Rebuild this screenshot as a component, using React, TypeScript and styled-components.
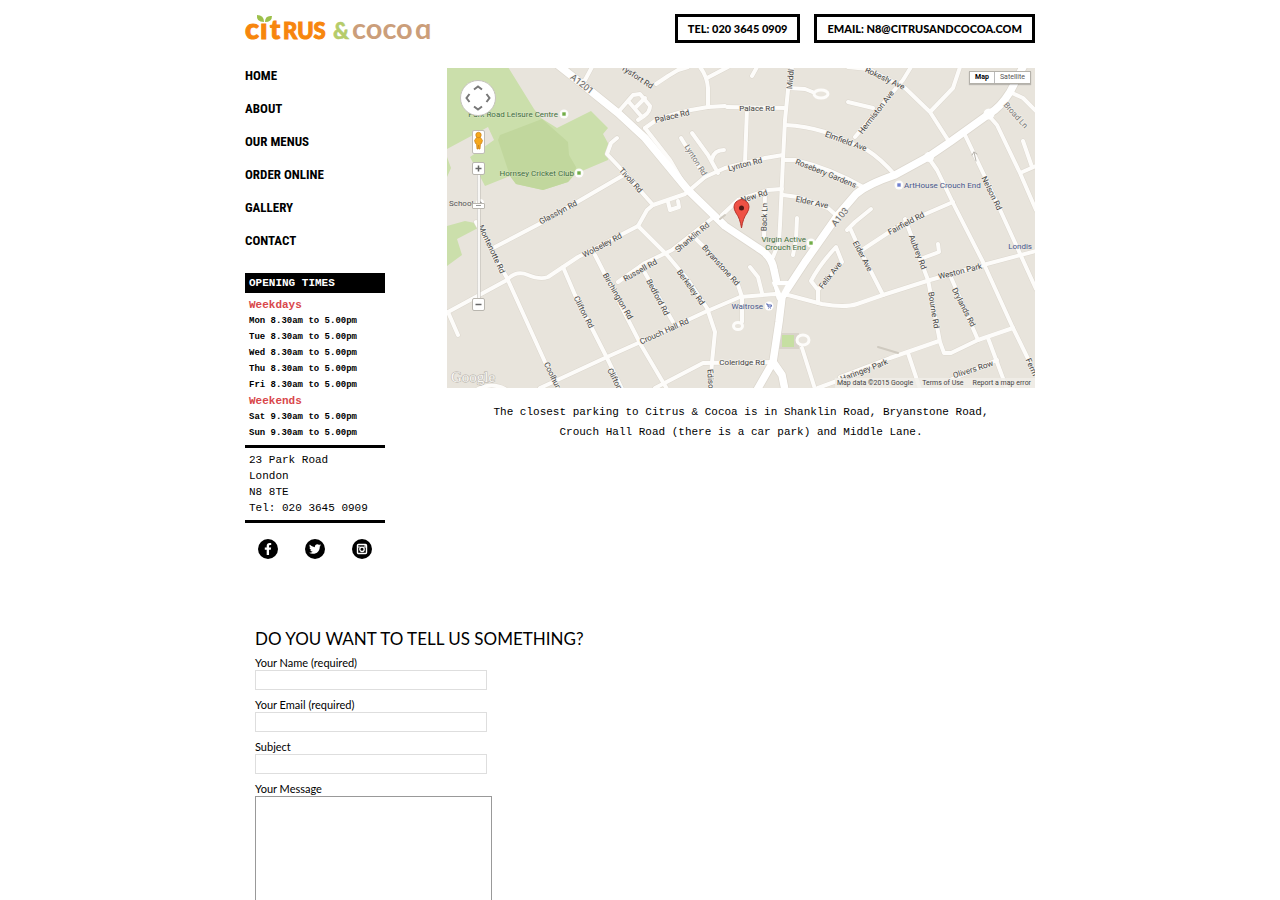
import React from "react";
import styled, { createGlobalStyle } from "styled-components";
import { FaFacebookF, FaTwitter } from "react-icons/fa";

const Global = createGlobalStyle`
  *, *::before, *::after { box-sizing: border-box; }
  body { margin: 0; background: #fff; color: #000; font-family: Lato, "Liberation Sans", sans-serif; }
  h1, h2, h3, p, ul, address { margin: 0; padding: 0; font-style: normal; }
  ul { list-style: none; }
  a { color: inherit; text-decoration: none; }
`;

const mono = `"Liberation Mono", "Courier New", monospace`;

const Page = styled.div`
  max-width: 790px;
  margin: 0 auto;
`;

const Header = styled.header`
  display: flex;
  flex-wrap: wrap;
  justify-content: space-between;
  gap: 14px;
  padding: 14px 0 25px;
`;

const LogoLink = styled.a`
  display: block;
  height: 29px;
`;

const LogoSvg = styled.svg`
  display: block;
  overflow: visible;
`;

const Contacts = styled.div`
  display: flex;
  flex-wrap: wrap;
  gap: 14px;
`;

const ContactLink = styled.a`
  padding: 0 10px;
  border: 3px solid #000;
  font-size: 11px;
  font-weight: 900;
  line-height: 23px;
`;

const Columns = styled.div`
  display: grid;
  grid-template-columns: 182px minmax(0, 1fr);
  gap: 20px;
  @media (max-width: 640px) {
    grid-template-columns: minmax(0, 1fr);
  }
`;

const Menu = styled.ul`
  display: flex;
  flex-direction: column;
  gap: 17px;
  margin-bottom: 24px;
  font-family: "Roboto Condensed", "Liberation Sans Narrow", "Liberation Sans", sans-serif;
  font-size: 13px;
  font-weight: 700;
  line-height: 16px;
`;

const Info = styled.section`
  width: 140px;
  font-family: ${mono};
  font-size: 11px;
  line-height: 16px;
`;

const InfoTitle = styled.h2`
  padding: 0 4px;
  background: #000;
  color: #fff;
  font-size: 11px;
  line-height: 20px;
`;

const InfoBlock = styled.div`
  padding: 4px;
  border-bottom: 3px solid #000;
  white-space: nowrap;
`;

const DayGroup = styled.h3`
  color: #d9474b;
  font-size: 11px;
  line-height: 16px;
`;

const Hours = styled.ul`
  font-size: 9px;
  font-weight: 700;
`;

const Social = styled.nav`
  display: flex;
  gap: 27px;
  padding: 16px 13px 0;
`;

const SocialLink = styled.a`
  display: grid;
  place-items: center;
  width: 20px;
  height: 20px;
  border-radius: 50%;
  background: #000;
  color: #fff;
  font-size: 12px;
`;

const MapFrame = styled.div`
  position: relative;
  overflow: hidden;
  background: #e8e4dc;
  font-family: Roboto, sans-serif;
`;

const MapSvg = styled.svg`
  display: block;
  width: 100%;
  height: auto;
  font-family: Roboto, sans-serif;
`;

const MapTypes = styled.div`
  position: absolute;
  top: 3px;
  right: 4px;
  display: flex;
  border: 1px solid #b4b1aa;
  background: #fff;
  box-shadow: 0 1px 1px rgba(0, 0, 0, 0.2);
`;

const MapType = styled.button<{ $active?: boolean }>`
  padding: 0 5px;
  border: 0;
  border-left: ${(p) => (p.$active ? "0" : "1px solid #bbb")};
  background: #fff;
  color: ${(p) => (p.$active ? "#000" : "#555")};
  font-family: inherit;
  font-size: 7px;
  font-weight: ${(p) => (p.$active ? 700 : 400)};
  line-height: 11px;
`;

const MapControls = styled.div`
  position: absolute;
  top: 12px;
  left: 13px;
  display: flex;
  flex-direction: column;
  align-items: center;
`;

const PanPad = styled.button`
  width: 36px;
  height: 36px;
  padding: 0;
  border: 1px solid #c6c3bd;
  border-radius: 50%;
  background: #fff;
`;

const Pegman = styled.button`
  width: 13px;
  height: 24px;
  margin: 14px 0 8px;
  padding: 0;
  border: 1px solid #c0bdb6;
  border-radius: 2px;
  background: #fff;
`;

const ZoomButton = styled.button`
  display: grid;
  place-items: center;
  width: 13px;
  height: 13px;
  padding: 0;
  border: 1px solid #b9b6af;
  border-radius: 2px;
  background: #fff;
`;

const Track = styled.div`
  display: flex;
  justify-content: center;
  width: 13px;
  height: 123px;
  padding-top: 28px;
  background: linear-gradient(90deg, transparent 5px, #bbb8b2 5px, #f8f7f5 6px, #f8f7f5 8px, #bbb8b2 8px, transparent 9px);
`;

const Handle = styled.div`
  flex: none;
  width: 13px;
  height: 6px;
  padding: 0 3px;
  border: 1px solid #b9b6af;
  border-radius: 1px;
  background: linear-gradient(#fff 1px, #999 1px, #999 2px, #fff 2px) content-box, #fff;
`;

const Credits = styled.div`
  position: absolute;
  right: 0;
  bottom: 0;
  display: flex;
  gap: 9px;
  padding: 0 4px 0 2px;
  background: rgba(240, 238, 233, 0.8);
  color: #444;
  font-size: 7px;
  line-height: 10px;
  white-space: nowrap;
`;

const Parking = styled.p`
  margin-top: 14px;
  font-family: ${mono};
  font-size: 11px;
  line-height: 20px;
  text-align: center;
`;

const Form = styled.form`
  display: flex;
  flex-direction: column;
  align-items: flex-start;
  gap: 8px;
  padding: 70px 10px 40px;
`;

const FormTitle = styled.h2`
  font-size: 17px;
  font-weight: 400;
  line-height: 19px;
`;

const Field = styled.label`
  display: flex;
  flex-direction: column;
  font-size: 11px;
  line-height: 14px;
`;

const TextInput = styled.input`
  width: 232px;
  max-width: 100%;
  height: 20px;
  padding: 0 4px;
  border: 1px solid #dedede;
  font: inherit;
`;

const MessageBox = styled.textarea`
  width: 237px;
  max-width: 100%;
  height: 150px;
  padding: 4px;
  border: 1px solid #999;
  resize: none;
  font: inherit;
`;

const minorRoads = [
  "M645 128L670 160L684 184",
  "M645 128L655 121Q675 112 708 107L725 106",
  "M727 107L785 108",
  "M708 107L708 88Q707 76 700 67",
  "M707 78L728 67",
  "M757 67L752 76",
  "M656 84L668 76L678 70L688 67",
  "M592 67L585 80L580 83",
  "M620 110L633 95L640 94L650 106Q650 112 644 116L638 120M629 102L641 116M636 107L645 98",
  "M792 67L788 90L785 120L783 160L780 225L779 242L773 257",
  "M788 88L805 89L815 93",
  "M785 125Q806 126 825 132L867 150Q880 158 895 175",
  "M783 160L795 160Q830 168 865 188",
  "M653 205L685 194L705 177L725 168L765 158L783 155",
  "M718 173L708 155L692 133",
  "M681 138L705 177",
  "M712 159Q714 150 724 150",
  "M747 109L745 162",
  "M722 215L738 200L768 190L782 189",
  "M765 193L764 236",
  "M797 218L796 240L793 255",
  "M783 195L798 197L828 208L837 216",
  "M850 228L860 250L883 295",
  "M715 216L672 250L645 263L618 282",
  "M617 138L611 143L607 154L622 170L653 205L647 210L638 226L578 257L563 267L548 277Q540 280 528 275T507 280L448 312",
  "M638 226L667 255L688 280L707 308L715 332L712 362L710 389",
  "M668 202L670 210L679 207L678 201",
  "M622 176L541 223L495 247",
  "M476 222L507 278L545 362L558 389",
  "M563 267L575 295L607 358L622 389",
  "M595 255L641 345L667 389",
  "M540 388L607 357L645 340L705 312L740 297L775 294L788 295L822 304Q845 308 857 304L883 295L930 280L983 265L1036 251",
  "M641 266L673 322",
  "M448 312L458 335",
  "M478 389Q492 382 505 389",
  "M695 238L705 248L738 285L742 297L742 322",
  "M750 267L758 277L762 293",
  "M655 388L703 363L773 362",
  "M802 348L815 389M818 388L845 378",
  "M818 303L818 290L811 281Q820 264 836 247L842 262L818 290",
  "M840 377L890 358L939 341",
  "M928 280L940 342L944 353L951 353L978 340L1013 328",
  "M950 275L978 340",
  "M928 157L937 170L955 207L983 262L1013 328L1036 375",
  "M965 135L985 177L1007 225L1036 289",
  "M990 117L997 125L1020 173L1036 210M1020 173L1036 166M1023 141L1032 167",
  "M1010 92L1023 98L1036 111",
  "M911 67L903 80L876 112L855 137",
  "M848 67L868 69L905 88L930 112L948 140M930 112L953 88L960 67",
  "M848 102L873 108",
  "M847 230L855 222L871 209",
  "M953 202L900 225L862 250",
  "M905 219L928 280M923 258L939 252L938 244",
  "M908 353L920 389M988 338L1007 389",
  "M950 380L997 360",
];

const mainRoads = [
  "M558 65L577 80L618 113L645 138L688 190L725 226L758 248Q772 256 774 270L780 297",
  "M1024 65L1010 92Q1000 108 989 114L950 142L928 157L895 175Q868 184 856 194L838 215L805 262L782 297L779 322L773 362L757 390",
  "M773 362L782 375L785 390",
];

type Label = [text: string, x: number, y: number, angle: number, tone?: string];

const roadLabels: Label[] = [
  ["rysfort Rd", 638, 77, 33],
  ["Palace Rd", 672, 116, -13],
  ["Palace Rd", 757, 108, 0],
  ["Middl", 790, 79, -85],
  ["Rokesly Ave", 885, 78, 25],
  ["Hermiston Ave", 876, 112, -52],
  ["Elmfield Ave", 846, 141, 20],
  ["Rosebery Gardens", 826, 173, 22],
  ["Lynton Rd", 696, 160, 58, "#777"],
  ["Lynton Rd", 745, 164, -14],
  ["New Rd", 754, 196, -17],
  ["Elder Ave", 812, 202, 12],
  ["Back Ln", 764, 217, -88],
  ["Tivoli Rd", 631, 180, 48],
  ["Glasslyn Rd", 558, 212, -28],
  ["Wolseley Rd", 602, 245, -28],
  ["Montenotte Rd", 492, 249, 65],
  ["Russell Rd", 640, 270, -29],
  ["Shanklin Rd", 692, 237, -40],
  ["Bryanstone Rd", 721, 265, 48],
  ["Berkeley Rd", 691, 287, 54],
  ["Bedford Rd", 658, 297, 62],
  ["Birchington Rd", 618, 296, 60],
  ["Clifton Rd", 584, 312, 63],
  ["Clifton", 615, 379, 63],
  ["Coolhurst", 554, 378, 64],
  ["Crouch Hall Rd", 664, 331, -24],
  ["Coleridge Rd", 742, 362, 0],
  ["Edison", 711, 381, 87],
  ["Felix Ave", 830, 275, -52],
  ["Elder Ave", 863, 256, 62],
  ["Aubrey Rd", 918, 252, 69],
  ["Fairfield Rd", 906, 223, -28],
  ["Weston Park", 960, 271, -14],
  ["Bourne Rd", 934, 310, 81],
  ["Drylands Rd", 964, 307, 63],
  ["Nelson Rd", 992, 193, 64],
  ["Broad Ln", 1016, 115, 48, "#777"],
  ["Haringey Park", 864, 370, -21],
  ["Olivers Row", 973, 369, -18],
  ["Ferm", 1032, 367, 66],
];

const routeLabels: Label[] = [
  ["A1201", 582, 84, 38, "#666"],
  ["A103", 840, 217, -50, "#666"],
];

const green = "#3f6f3c";
const blue = "#46568c";

function Logo() {
  return (
    <LogoSvg width="186" height="29" viewBox="0 0 186 29" role="img" aria-label="Citrus & Cocoa">
      <g fontFamily="Lato, sans-serif" fontWeight="900">
        <g fill="#f7860d" stroke="#f7860d" strokeWidth="1">
          <text x="0" y="25" fontSize="29">c</text>
          <text x="15" y="25" fontSize="29">ı</text>
          <text x="25" y="25" fontSize="27">t</text>
          <text x="38" y="25" fontSize="22">RUS</text>
        </g>
        <text x="88" y="25" fontSize="22" fill="#b5cc6a" stroke="#b5cc6a" strokeWidth="0.5">&amp;</text>
        <g fill="#cb9e7a" fontSize="29" fontWeight="700">
          <text x="107" y="25">coco</text>
          <text x="170" y="25">ɑ</text>
        </g>
      </g>
      <path d="M19 8Q11 8 12 1Q19 1 19 8ZM20 8Q20 1 27 2Q27 8 20 8Z" fill="#9cc04a" />
    </LogoSvg>
  );
}

function InstagramGlyph() {
  return (
    <svg width="12" height="12" viewBox="0 0 12 12" fill="none" stroke="#fff" aria-hidden="true">
      <rect x="1.5" y="1.5" width="9" height="9" rx="1" strokeWidth="1.4" />
      <circle cx="6" cy="6.3" r="2.2" strokeWidth="1.3" />
      <path d="M2 4H4.5M7.5 4H10M8.5 2.7H9.8" strokeWidth="1.2" />
    </svg>
  );
}

function RoadText({ label, size }: { label: Label; size: number }) {
  const [text, x, y, angle, tone = "#444"] = label;
  return (
    <text transform={`translate(${x} ${y}) rotate(${angle})`} y="3" fontSize={size} fill={tone}>
      {text}
    </text>
  );
}

function PlaceDot({ x, y, color }: { x: number; y: number; color: string }) {
  return (
    <g>
      <circle cx={x} cy={y} r="4.5" fill="#fff" fillOpacity="0.9" />
      <rect x={x - 1.7} y={y - 1.7} width="3.4" height="3.4" fill={color} />
    </g>
  );
}

function StreetMap() {
  return (
    <MapFrame>
      <MapSvg viewBox="447 68 588 320" role="img" aria-label="Map of Crouch End">
        <rect x="447" y="68" width="588" height="320" fill="#e8e4dc" />
        <path
          d="M447 67H508L534 109L541 118L557 128L591 111L608 128L603 134L609 145L608 160L575 174L568 182L543 190L516 184L510 176L485 186L470 157L494 140L488 127L447 149ZM447 157L451 168L447 177ZM447 226L465 221L475 223L478 228L457 239L462 255L447 266Z"
          fill="#cbdfab"
        />
        <path d="M500 135L542 119L568 142L569 155L576 167L575 174L568 182L543 190L516 184L510 176L498 140Z" fill="#c1d79d" />
        <path d="M779 333H799V349H779Z" fill="#d9d4ca" />
        <path d="M782 335H794V347H782Z" fill="#c6dfa2" />
        <g fill="none" strokeLinecap="round" strokeLinejoin="round">
          <g stroke="#dcd7ce" strokeWidth="5">
            {minorRoads.map((d) => <path key={d} d={d} />)}
          </g>
          <g stroke="#dcd7ce" strokeWidth="9">
            {mainRoads.map((d) => <path key={d} d={d} />)}
          </g>
          <g stroke="#fdfcfa" strokeWidth="4">
            {minorRoads.map((d) => <path key={d} d={d} />)}
          </g>
          <g stroke="#fff" strokeWidth="7.5">
            {mainRoads.map((d) => <path key={d} d={d} />)}
          </g>
          <path d="M774 283H789L781 298Z" fill="#e8e4dc" stroke="#fff" strokeWidth="4" />
          <g stroke="#fdfcfa" strokeWidth="3" fill="#e8e4dc">
            <ellipse cx="821" cy="94" rx="7" ry="4" />
            <ellipse cx="738" cy="326" rx="4.5" ry="3.5" />
            <ellipse cx="803" cy="340" rx="6" ry="5" />
          </g>
          <circle cx="989" cy="114" r="5.5" fill="#fff" />
          <circle cx="929" cy="157" r="5" fill="#fff" />
          <path d="M878 347L898 353M725 215L720 219" stroke="#cfcac0" strokeWidth="2" />
          <path d="M974 152L976 161M972 155L974 152L977 154" stroke="#b5b1aa" />
        </g>

        <g textAnchor="middle" stroke="#f3f0ea" strokeWidth="1.5" strokeLinejoin="round" paintOrder="stroke">
          {roadLabels.map((label, i) => <RoadText key={i} label={label} size={8} />)}
          {routeLabels.map((label) => <RoadText key={label[0]} label={label} size={9} />)}
        </g>

        <g fontSize="8" fill={green} stroke="#f3f0ea" strokeWidth="1" strokeOpacity="0.4" paintOrder="stroke">
          <text x="558" y="117" textAnchor="end">Park Road Leisure Centre</text>
          <text x="574" y="176" textAnchor="end">Hornsey Cricket Club</text>
          <text x="806" y="242" textAnchor="end">Virgin Active</text>
          <text x="806" y="250" textAnchor="end">Crouch End</text>
          <text x="449" y="206" fill="#555">School</text>
          <text x="904" y="188" fill={blue}>ArtHouse Crouch End</text>
          <text x="763" y="309" textAnchor="end" fill={blue}>Waitrose</text>
          <text x="1032" y="249" textAnchor="end" fill={blue}>Londis</text>
        </g>
        <PlaceDot x={564} y={114} color="#71ad48" />
        <PlaceDot x={579} y={173} color="#71ad48" />
        <PlaceDot x={811} y={243} color="#71ad48" />
        <PlaceDot x={899} y={185} color="#6f7fd0" />
        <circle cx="480" cy="203" r="4" fill="#fff" />
        <path d="M478 204L480 201L483 204V206H478Z" fill="#777" />
        <circle cx="769" cy="306" r="4.5" fill="#fff" />
        <path d="M766 304H767.5L768.3 307H771L771.5 305H768M768.5 308.5H769M770.5 308.5H771" fill="none" stroke="#5566b0" />

        <text x="451" y="382" fontFamily="Liberation Serif, serif" fontSize="15" fill="#f8f7f4" stroke="#b5b1a9" strokeWidth="1" paintOrder="stroke">
          Google
        </text>
        <path d="M741.5 228Q740 218 736 213Q732 206 736 202Q741.5 197 747 202Q751 206 747 213Q743 218 741.5 228Z" fill="#ef5145" stroke="#b8332b" />
        <circle cx="741.5" cy="208" r="2.5" fill="#521715" />
      </MapSvg>

      <MapControls>
        <PanPad type="button" aria-label="Pan map">
          <svg width="34" height="34" viewBox="0 0 34 34" fill="none" stroke="#777" strokeWidth="2">
            <path d="M13 8.5L17 5.5L21 8.5M13 25.5L17 28.5L21 25.5M8.5 13L5.5 17L8.5 21M25.5 13L28.5 17L25.5 21" />
          </svg>
        </PanPad>
        <Pegman type="button" aria-label="Street view">
          <svg width="11" height="20" viewBox="0 0 11 20" fill="#f6a81c" stroke="#c97e12" strokeWidth="0.7">
            <path d="M3.5 6.5H7.5L9.5 9.5L8.5 12.5H7.5L7 18H5.9L5.5 14L5.1 18H4L3.5 12.5H2.5L1.5 9.5Z" />
            <circle cx="5.5" cy="4" r="2.7" />
          </svg>
        </Pegman>
        <ZoomButton type="button" aria-label="Zoom in">
          <svg width="7" height="7" viewBox="0 0 7 7" stroke="#666" strokeWidth="1.5"><path d="M.5 3.5H6.5M3.5 .5V6.5" /></svg>
        </ZoomButton>
        <Track><Handle /></Track>
        <ZoomButton type="button" aria-label="Zoom out">
          <svg width="7" height="7" viewBox="0 0 7 7" stroke="#666" strokeWidth="1.5"><path d="M.5 3.5H6.5" /></svg>
        </ZoomButton>
      </MapControls>

      <MapTypes>
        <MapType type="button" $active>Map</MapType>
        <MapType type="button">Satellite</MapType>
      </MapTypes>
      <Credits>
        <span>Map data ©2015 Google</span>
        <a href="#terms">Terms of Use</a>
        <a href="#report">Report a map error</a>
      </Credits>
    </MapFrame>
  );
}

const menu = ["HOME", "ABOUT", "OUR MENUS", "ORDER ONLINE", "GALLERY", "CONTACT"];
const weekdays = ["Mon", "Tue", "Wed", "Thu", "Fri"];
const weekend = ["Sat", "Sun"];

export default function App() {
  return (
    <>
      <Global />
      <Page>
        <Header>
          <LogoLink href="#home"><Logo /></LogoLink>
          <Contacts>
            <ContactLink href="tel:02036450909">TEL: 020 3645 0909</ContactLink>
            <ContactLink href="mailto:n8@citrusandcocoa.com">EMAIL: N8@CITRUSANDCOCOA.COM</ContactLink>
          </Contacts>
        </Header>

        <Columns>
          <aside>
            <nav aria-label="Main">
              <Menu>
                {menu.map((item) => <li key={item}><a href="#page">{item}</a></li>)}
              </Menu>
            </nav>
            <Info>
              <InfoTitle>OPENING TIMES</InfoTitle>
              <InfoBlock>
                <DayGroup>Weekdays</DayGroup>
                <Hours>{weekdays.map((day) => <li key={day}>{day} 8.30am to 5.00pm</li>)}</Hours>
                <DayGroup>Weekends</DayGroup>
                <Hours>{weekend.map((day) => <li key={day}>{day} 9.30am to 5.00pm</li>)}</Hours>
              </InfoBlock>
              <InfoBlock as="address">
                23 Park Road<br />London<br />N8 8TE<br />Tel: 020 3645 0909
              </InfoBlock>
            </Info>
            <Social aria-label="Social media">
              <SocialLink href="#facebook" aria-label="Facebook"><FaFacebookF /></SocialLink>
              <SocialLink href="#twitter" aria-label="Twitter"><FaTwitter /></SocialLink>
              <SocialLink href="#instagram" aria-label="Instagram"><InstagramGlyph /></SocialLink>
            </Social>
          </aside>
          <main>
            <StreetMap />
            <Parking>
              The closest parking to Citrus &amp; Cocoa is in Shanklin Road, Bryanstone Road,
              <br />
              Crouch Hall Road (there is a car park) and Middle Lane.
            </Parking>
          </main>
        </Columns>

        <Form>
          <FormTitle>DO YOU WANT TO TELL US SOMETHING?</FormTitle>
          <Field>Your Name (required)<TextInput type="text" name="name" required /></Field>
          <Field>Your Email (required)<TextInput type="email" name="email" required /></Field>
          <Field>Subject<TextInput type="text" name="subject" /></Field>
          <Field>Your Message<MessageBox name="message" /></Field>
        </Form>
      </Page>
    </>
  );
}
